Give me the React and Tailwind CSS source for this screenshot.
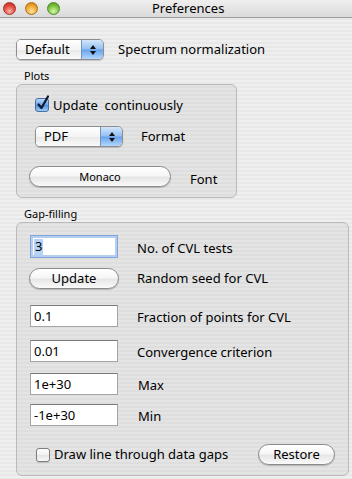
import React from "react";

const stripes =
  "bg-[repeating-linear-gradient(to_bottom,#efefef_0px,#efefef_2px,#e8e8e8_2px,#e8e8e8_4px)]";

function Popup({ label }) {
  return (
    <div className="flex w-[88px] h-[21px] rounded-[5px] border border-[#8e8e8e] overflow-hidden shadow-[0_1px_1px_rgba(0,0,0,0.18)]">
      <div className="flex-1 flex items-center pl-[8px] bg-[linear-gradient(to_bottom,#ffffff,#f4f4f4_50%,#e8e8e8_52%,#fbfbfb)] text-[13px] leading-none">
        {label}
      </div>
      <div className="w-[22px] border-l border-[#7393bd] bg-[linear-gradient(to_bottom,#d3e6fc,#93bff2_48%,#67a2ea_52%,#b4d7fd)] flex flex-col items-center justify-center gap-[2px]">
        <svg width="6" height="4" viewBox="0 0 6 4">
          <path d="M3 0L6 4H0z" fill="#111" />
        </svg>
        <svg width="6" height="4" viewBox="0 0 6 4">
          <path d="M0 0H6L3 4z" fill="#111" />
        </svg>
      </div>
    </div>
  );
}

function Pill({ label, w, size }) {
  return (
    <div
      className={`${w} ${size} h-[21px] rounded-full border border-[#8a8a8a] bg-[linear-gradient(to_bottom,#ffffff,#f6f6f6_45%,#e6e6e6_55%,#fafafa)] shadow-[0_1px_1px_rgba(0,0,0,0.2)] flex items-center justify-center leading-none`}
    >
      {label}
    </div>
  );
}

function Field({ value }) {
  return (
    <div className="w-[88px] h-[22px] bg-white border border-[#a5a5a5] border-t-[#7a7a7a] flex items-center pl-[3px] text-[13px] leading-none">
      {value}
    </div>
  );
}

function Check({ checked }) {
  if (checked) {
    return (
      <div className="w-[14px] h-[14px] rounded-[3px] border border-[#4a6fa0] bg-[linear-gradient(to_bottom,#b9d8fb,#6aa6ec_50%,#4f92e3_52%,#9fcaf8)] flex items-center justify-center relative">
        <svg width="14" height="16" viewBox="0 0 14 16" className="absolute left-[0px] top-[-4px]">
          <path d="M2.5 9.5L5.5 13L12 1.5" stroke="#0d1a2e" strokeWidth="2.2" fill="none" strokeLinecap="round" strokeLinejoin="round" />
        </svg>
      </div>
    );
  }
  return (
    <div className="w-[14px] h-[14px] rounded-[3px] border border-[#7d7d7d] bg-[linear-gradient(to_bottom,#ffffff,#f1f1f1_50%,#e3e3e3_52%,#fafafa)] shadow-[0_1px_1px_rgba(0,0,0,0.15)]" />
  );
}

export default function App() {
  return (
    <div
      className={`w-[352px] h-[479px] overflow-hidden ${stripes} font-['Noto_Sans',sans-serif] text-black`}
    >
      {/* Title bar */}
      <div className="h-[18px] flex items-center border-b border-[#9c9c9c] bg-[linear-gradient(to_bottom,#efefef,#dadada)]">
        <div className="flex items-center gap-[9px] pl-[3px]">
          <div className="w-[13px] h-[13px] rounded-full border border-[#a3332b] bg-[radial-gradient(circle_at_50%_75%,#ffb3a8,#e2483b_55%,#b02a20)]" />
          <div className="w-[13px] h-[13px] rounded-full border border-[#a9701a] bg-[radial-gradient(circle_at_50%_75%,#ffe3a0,#f2a531_55%,#c27a12)]" />
          <div className="w-[13px] h-[13px] rounded-full border border-[#4d8a2a] bg-[radial-gradient(circle_at_50%_75%,#d7f7a8,#7cc43e_55%,#4b8e20)]" />
        </div>
        <div className="ml-[92px] text-[13px] leading-none">Preferences</div>
      </div>

      {/* Spectrum normalization */}
      <div className="mt-[21px] ml-[16px] flex items-center">
        <Popup label="Default" />
        <div className="ml-[14px] text-[13px] leading-none">Spectrum normalization</div>
      </div>

      {/* Plots */}
      <div className="mt-[9px] ml-[24px] text-[11px] leading-[13px]">Plots</div>
      <div className="mt-[2px] ml-[16px] w-[221px] h-[114px] rounded-[6px] border border-[#bababa] bg-black/[0.045]">
        <div className="mt-[13px] ml-[18px] flex items-center">
          <Check checked />
          <div className="ml-[4px] text-[13px] leading-none whitespace-pre">Update  continuously</div>
        </div>
        <div className="mt-[14px] ml-[18px] flex items-center">
          <Popup label="PDF" />
          <div className="ml-[18px] text-[13px] leading-none">Format</div>
        </div>
        <div className="mt-[19px] ml-[12px] flex items-center">
          <Pill label="Monaco" w="w-[142px]" size="text-[11px]" />
          <div className="ml-[19px] mt-[5px] text-[13px] leading-none">Font</div>
        </div>
      </div>

      {/* Gap-filling */}
      <div className="mt-[9px] ml-[24px] text-[11px] leading-[13px]">Gap-filling</div>
      <div className="mt-[2px] ml-[16px] w-[333px] h-[254px] rounded-[6px] border border-[#bababa] bg-black/[0.045] flex flex-col">
        <div className="mt-[12px] ml-[13px] flex items-center">
          <div className="w-[88px] h-[23px] bg-white border border-[#7fa7dc] shadow-[inset_0_0_0_2px_rgba(120,165,225,0.55)] flex items-center pl-[3px] text-[13px] leading-none">
            <span className="inline-flex items-center h-[16px] px-[1px] bg-[#b5d3f7]">3</span>
          </div>
          <div className="ml-[19px] mt-[3px] text-[13px] leading-none">No. of CVL tests</div>
        </div>
        <div className="mt-[10px] ml-[12px] flex items-center">
          <Pill label="Update" w="w-[90px]" size="text-[13px]" />
          <div className="ml-[18px] text-[13px] leading-none">Random seed for CVL</div>
        </div>
        <div className="mt-[16px] ml-[13px] flex items-center">
          <Field value="0.1" />
          <div className="ml-[19px] mt-[2px] text-[13px] leading-none">Fraction of points for CVL</div>
        </div>
        <div className="mt-[13px] ml-[13px] flex items-center">
          <Field value="0.01" />
          <div className="ml-[19px] mt-[2px] text-[13px] leading-none">Convergence criterion</div>
        </div>
        <div className="mt-[11px] ml-[13px] flex items-center">
          <Field value="1e+30" />
          <div className="ml-[20px] mt-[2px] text-[13px] leading-none">Max</div>
        </div>
        <div className="mt-[9px] ml-[13px] flex items-center">
          <Field value="-1e+30" />
          <div className="ml-[20px] mt-[2px] text-[13px] leading-none">Min</div>
        </div>
        <div className="mt-[18px] ml-[19px] mr-[13px] flex items-center justify-between">
          <div className="flex items-center">
            <Check />
            <div className="ml-[4px] text-[13px] leading-none">Draw line through data gaps</div>
          </div>
          <Pill label="Restore" w="w-[77px]" size="text-[13px]" />
        </div>
      </div>
    </div>
  );
}
